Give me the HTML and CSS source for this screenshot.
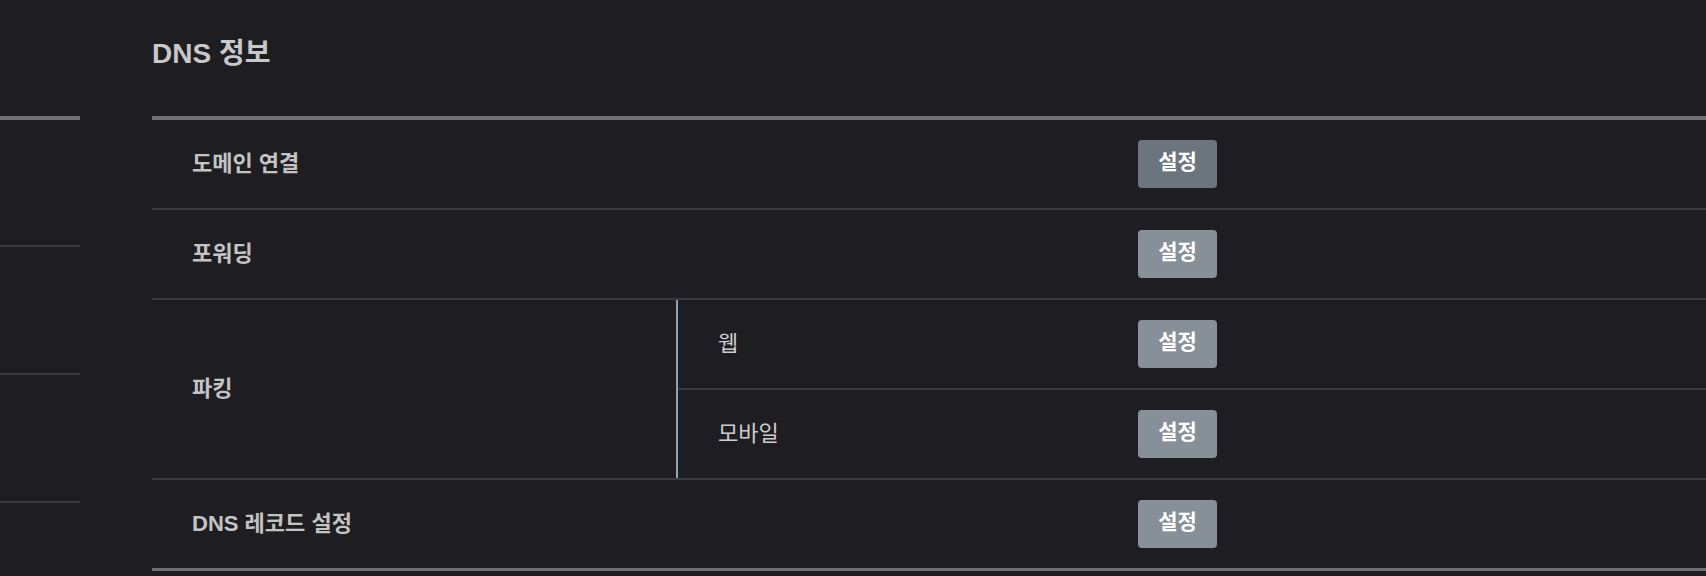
FILE: index.html
```html
<!DOCTYPE html>
<html lang="ko">
<head>
<meta charset="utf-8">
<title>DNS 정보</title>
<link rel="stylesheet" href="styles.css">
</head>
<body>
<div class="page">
  <aside class="side">
    <div class="side-list">
      <div class="side-item"></div>
      <div class="side-item"></div>
      <div class="side-item"></div>
      <div class="side-item"></div>
    </div>
  </aside>
  <main class="main">
    <h1 class="title">DNS 정보</h1>
    <div class="table">
      <div class="row">
        <div class="label">도메인 연결</div>
        <div class="action"><button class="btn btn-dark">설정</button></div>
      </div>
      <div class="row">
        <div class="label">포워딩</div>
        <div class="action"><button class="btn">설정</button></div>
      </div>
      <div class="row group">
        <div class="label group-label">파킹</div>
        <div class="subs">
          <div class="sub">
            <div class="sublabel">웹</div>
            <div class="action"><button class="btn">설정</button></div>
          </div>
          <div class="sub">
            <div class="sublabel">모바일</div>
            <div class="action"><button class="btn">설정</button></div>
          </div>
        </div>
      </div>
      <div class="row last">
        <div class="label">DNS 레코드 설정</div>
        <div class="action"><button class="btn">설정</button></div>
      </div>
    </div>
  </main>
</div>
</body>
</html>
```
FILE: styles.css
```css
* { box-sizing: border-box; }
html, body {
  margin: 0;
  padding: 0;
  background: #1e1e22;
  height: 100%;
  overflow: hidden;
}
body {
  font-family: "Liberation Sans", "Noto Sans CJK KR", sans-serif;
  color: #c6c6c6;
}
.page {
  display: flex;
  gap: 72px;
  height: 576px;
  overflow: hidden;
}
.side {
  width: 80px;
  flex: 0 0 80px;
  padding-top: 116px;
}
.side-list {
  border-top: 4px solid #707070;
}
.side-item {
  height: 128px;
  border-bottom: 2px solid #3a3a3d;
}
.side-item:first-child {
  height: 127px;
}
.main {
  flex: 1;
  min-width: 0;
}
.title {
  margin: 0;
  height: 116px;
  padding-top: 40px;
  font-size: 28px;
  line-height: 1;
  font-weight: 700;
  color: #c8c8c8;
}
.table {
  border-top: 4px solid #707070;
  border-bottom: 3px solid #707070;
}
.row {
  display: flex;
  border-bottom: 2px solid #3a3a3d;
  min-height: 90px;
}
.row.last {
  border-bottom: none;
  min-height: 88px;
}
.label {
  width: 986px;
  flex: 0 0 986px;
  padding-left: 40px;
  padding-bottom: 6px;
  display: flex;
  align-items: center;
  font-size: 22px;
  font-weight: 700;
  color: #c4c4c4;
}
.group-label {
  width: 524px;
  flex: 0 0 524px;
}
.subs {
  flex: 1;
  border-left: 2px solid #8fa3b6;
  display: flex;
  flex-direction: column;
}
.sub {
  display: flex;
  height: 88px;
}
.sub + .sub {
  border-top: 2px solid #3a3a3d;
  height: 90px;
}
.sublabel {
  width: 460px;
  flex: 0 0 460px;
  padding-left: 40px;
  padding-bottom: 6px;
  display: flex;
  align-items: center;
  font-size: 22px;
  font-weight: 400;
  color: #cdcdcd;
}
.action {
  flex: 1;
  display: flex;
  align-items: center;
}
.btn {
  font-family: "Liberation Sans", "Noto Sans CJK KR", sans-serif;
  height: 48px;
  width: 79px;
  padding: 0 0 9px;
  border: none;
  border-radius: 4px;
  background: #878f98;
  color: #ffffff;
  font-size: 21px;
  font-weight: 700;
  display: inline-flex;
  align-items: center;
  justify-content: center;
}
.btn-dark {
  background: #6c757d;
}
```
